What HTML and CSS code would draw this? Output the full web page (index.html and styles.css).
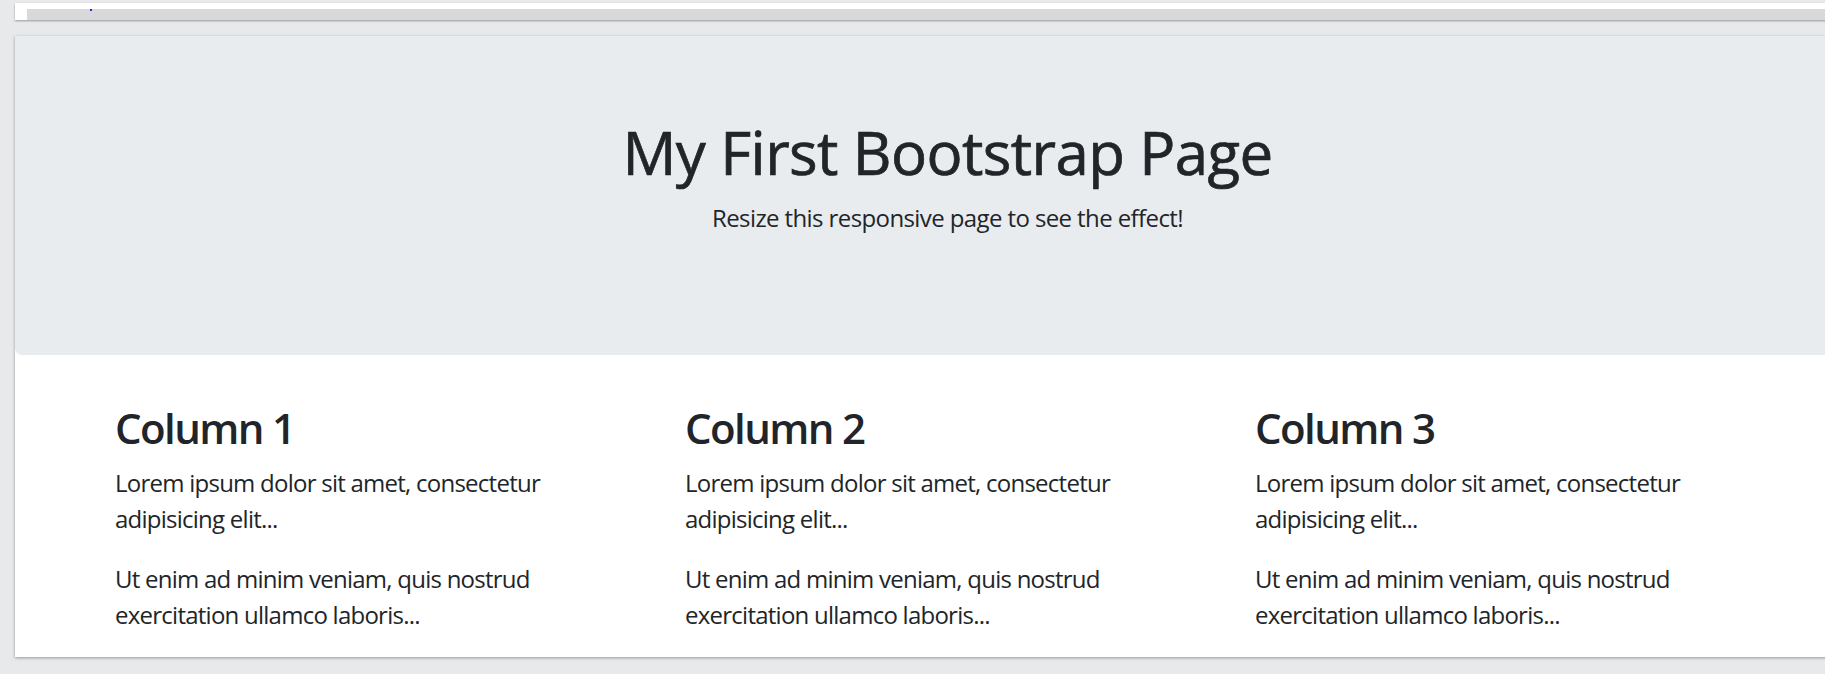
FILE: index.html
```html
<!DOCTYPE html>
<html lang="en">
<head>
<meta charset="utf-8">
<title>My First Bootstrap Page</title>
<link rel="stylesheet" href="styles.css">
</head>
<body>
  <div class="topbar">
    <div class="topbar-inner"><span class="dot"></span></div>
  </div>
  <main class="card">
    <section class="jumbotron">
      <h1>My First Bootstrap Page</h1>
      <p>Resize this responsive page to see the effect!</p>
    </section>
    <section class="columns">
      <div class="col">
        <h3>Column 1</h3>
        <p>Lorem ipsum dolor sit amet, consectetur adipisicing elit...</p>
        <p>Ut enim ad minim veniam, quis nostrud exercitation ullamco laboris...</p>
      </div>
      <div class="col">
        <h3>Column 2</h3>
        <p>Lorem ipsum dolor sit amet, consectetur adipisicing elit...</p>
        <p>Ut enim ad minim veniam, quis nostrud exercitation ullamco laboris...</p>
      </div>
      <div class="col">
        <h3>Column 3</h3>
        <p>Lorem ipsum dolor sit amet, consectetur adipisicing elit...</p>
        <p>Ut enim ad minim veniam, quis nostrud exercitation ullamco laboris...</p>
      </div>
    </section>
  </main>
</body>
</html>
```

FILE: styles.css
```css
html, body {
  margin: 0;
  height: 100%;
  overflow: hidden;
}
body {
  background: #e8e9eb;
  padding: 3px 0 0 15px;
  box-sizing: border-box;
  font-family: "Open Sans", "Noto Sans", sans-serif;
  color: #212529;
}
.topbar {
  width: 1865px;
  background: #fff;
  height: 17px;
  padding: 6px 0 0 12px;
  box-sizing: border-box;
  box-shadow: 0 1px 2px rgba(0, 0, 0, 0.35);
}
.topbar-inner {
  position: relative;
  height: 11px;
  background: #d9d9d9;
}
.dot {
  position: absolute;
  left: 63px;
  top: 0;
  width: 2px;
  height: 2px;
  background: #2a2ad0;
}
.card {
  display: block;
  width: 1865px;
  margin-top: 16px;
  height: 621px;
  background: #fff;
  box-shadow: 0 1px 3px rgba(0, 0, 0, 0.35);
}
.jumbotron {
  height: 319px;
  box-sizing: border-box;
  background: #e9ecef;
  border-radius: 0 0 7px 7px;
  padding: 80px 48px 0;
  text-align: center;
}
.jumbotron h1 {
  margin: 0 0 12px;
  font-size: 60px;
  font-weight: 400;
  line-height: 1.2;
  letter-spacing: -0.6px;
  -webkit-text-stroke: 0.7px #212529;
}
.jumbotron p {
  margin: 0;
  font-size: 24px;
  line-height: 36px;
  letter-spacing: -0.6px;
}
.col h3 {
  margin: 0 0 12px;
  font-size: 42px;
  font-weight: 600;
  line-height: 1.2;
  letter-spacing: -1.6px;
}
.columns {
  display: grid;
  grid-template-columns: repeat(3, 570px);
  padding: 48px 0 0 100px;
}
.col p {
  margin: 0 0 24px;
  font-size: 24px;
  line-height: 36px;
  letter-spacing: -0.75px;
  max-width: 500px;
}
```
